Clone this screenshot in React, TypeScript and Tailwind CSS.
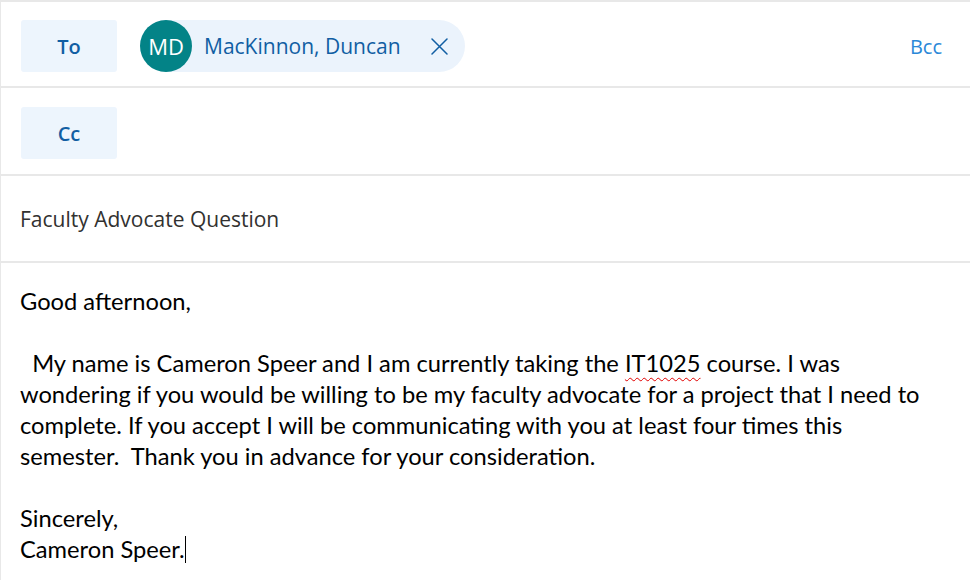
import React from "react";

const ui = { fontFamily: '"Open Sans", "Noto Sans", sans-serif' };
const body = { fontFamily: 'Lato, "Liberation Sans", sans-serif' };

function XIcon() {
  return (
    <svg width="17" height="17" viewBox="0 0 17 17" fill="none">
      <path d="M1 1 L16 16 M16 1 L1 16" stroke="#115ea3" strokeWidth="1.5" strokeLinecap="round" />
    </svg>
  );
}

export default function App() {
  return (
    <div className="w-[970px] h-[580px] bg-white overflow-hidden border-t-2 border-l border-[#e8e8e8]" style={ui}>
      <div className="h-[86px] border-b-2 border-[#e8e8e8] flex items-start pt-[18px] pl-[20px] pr-[28px]">
        <div className="w-[96px] h-[52px] rounded-[3px] bg-[#edf5fd] flex items-center justify-center text-[20px] font-semibold text-[#115ea3] pt-[1px]">
          To
        </div>
        <div className="ml-[23px] h-[52px] w-[325px] rounded-full bg-[#ebf3fc] flex items-center">
          <div className="w-[52px] h-[52px] rounded-full bg-[#038387] flex items-center justify-center text-white text-[22px]">
            MD
          </div>
          <span className="ml-[12px] text-[21px] text-[#115ea3] pt-[1px]">MacKinnon, Duncan</span>
          <span className="ml-[30px] flex items-center"><XIcon /></span>
        </div>
        <div className="ml-auto h-[52px] flex items-center text-[20px] text-[#2b88d8] pt-[1px]">Bcc</div>
      </div>
      <div className="h-[88px] border-b-2 border-[#e8e8e8] flex items-start pt-[19px] pl-[20px]">
        <div className="w-[96px] h-[52px] rounded-[3px] bg-[#edf5fd] flex items-center justify-center text-[20px] font-semibold text-[#115ea3] pt-[1px]">
          Cc
        </div>
      </div>
      <div className="h-[87px] border-b-2 border-[#e8e8e8] flex items-center pl-[19px] pt-[3px] text-[21px] text-[#323130]">
        Faculty Advocate Question
      </div>
      <div className="pl-[19px] pt-[23px] text-[23.7px] leading-[31px] text-black whitespace-pre-wrap w-[937px]" style={body}>
        <div>Good afternoon,</div>
        <div>&nbsp;</div>
        <div>
          {"  My name is Cameron Speer and I am currently taking the "}
          <span className="underline decoration-wavy decoration-[#e00000] decoration-1 underline-offset-[5px]">IT1025</span>
          {" course. I was wondering if you would be willing to be my faculty advocate for a project that I need to complete. If you accept I will be communicating with you at least four times this semester.  Thank you in advance for your consideration."}
        </div>
        <div>&nbsp;</div>
        <div>Sincerely,</div>
        <div className="flex items-center">
          Cameron Speer.<span className="inline-block w-px h-[27px] bg-black" />
        </div>
      </div>
    </div>
  );
}
